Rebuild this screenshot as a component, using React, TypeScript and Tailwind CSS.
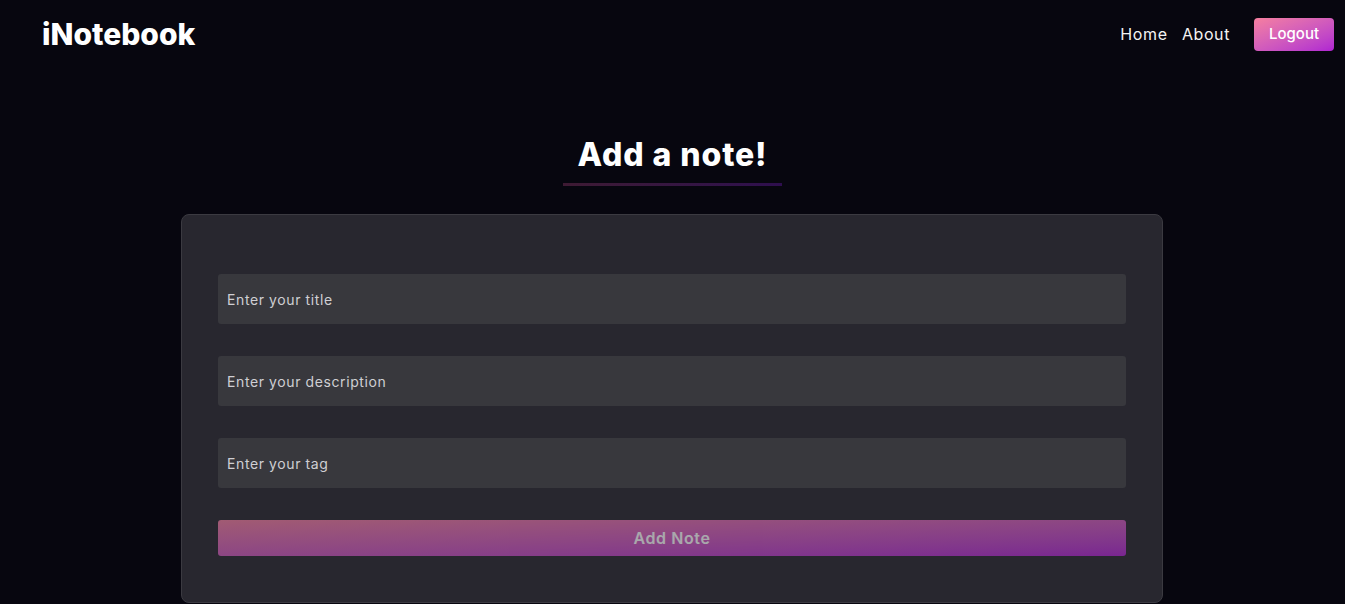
import React, { useState } from 'react';

// Simple note form page
const App: React.FC = () => {
  const [title, setTitle] = useState('');
  const [description, setDescription] = useState('');
  const [tag, setTag] = useState('');

  const disabled = title.length < 3 || description.length < 5;

  return (
    <div className="min-h-screen bg-[#07060f] font-['Inter','Noto_Sans',sans-serif] text-white">
      {/* Navbar */}
      <nav className="flex h-[68px] items-center justify-between pl-[42px] pr-[11px]">
        <a href="#" className="text-[30px] font-extrabold tracking-[0px]">iNotebook</a>
        <div className="flex items-center">
          <a href="#" className="text-[16px] tracking-[0.7px] text-[#f3f3f3]">Home</a>
          <a href="#" className="ml-[14px] text-[16px] tracking-[0.6px] text-[#f3f3f3]">About</a>
          <button className="ml-[24px] h-[33px] w-[80px] rounded-[4px] bg-gradient-to-br from-[#f67f9f] to-[#b022d2] text-[15px] font-medium text-white">
            Logout
          </button>
        </div>
      </nav>

      {/* Heading */}
      <div className="mt-[68px] flex flex-col items-center">
        <h1 className="text-[32px] font-extrabold leading-[38px] tracking-[0.9px]">Add a note!</h1>
        <div className="mt-[9px] h-[3px] w-[219px] bg-gradient-to-r from-[#3e1a33] to-[#2e0e4e]" />
      </div>

      {/* Form card */}
      <div className="pr-[1px]">
        <div className="mx-auto mt-[28px] w-[982px] rounded-[8px] border border-[#3b3a41] bg-[#28272f] px-[36px] pt-[59px] pb-[46px]">
          <form className="flex flex-col gap-[32px]" onSubmit={(e) => e.preventDefault()}>
            <input
              value={title}
              onChange={(e) => setTitle(e.target.value)}
              placeholder="Enter your title"
              className="h-[50px] w-full rounded-[3px] bg-[#38383d] px-[9px] text-[14px] tracking-[0.6px] text-white placeholder-[#cfcfd3] outline-none"
            />
            <input
              value={description}
              onChange={(e) => setDescription(e.target.value)}
              placeholder="Enter your description"
              className="h-[50px] w-full rounded-[3px] bg-[#38383d] px-[9px] text-[14px] tracking-[0.6px] text-white placeholder-[#cfcfd3] outline-none"
            />
            <input
              value={tag}
              onChange={(e) => setTag(e.target.value)}
              placeholder="Enter your tag"
              className="h-[50px] w-full rounded-[3px] bg-[#38383d] px-[9px] text-[14px] tracking-[0.6px] text-white placeholder-[#cfcfd3] outline-none"
            />
            <button
              type="submit"
              disabled={disabled}
              className="h-[36px] w-full rounded-[3px] bg-gradient-to-br from-[#f27da0] to-[#b023d2] text-[16px] font-semibold tracking-[0.6px] text-white disabled:opacity-60"
            >
              Add Note
            </button>
          </form>
        </div>
      </div>
    </div>
  );
};

export default App;
